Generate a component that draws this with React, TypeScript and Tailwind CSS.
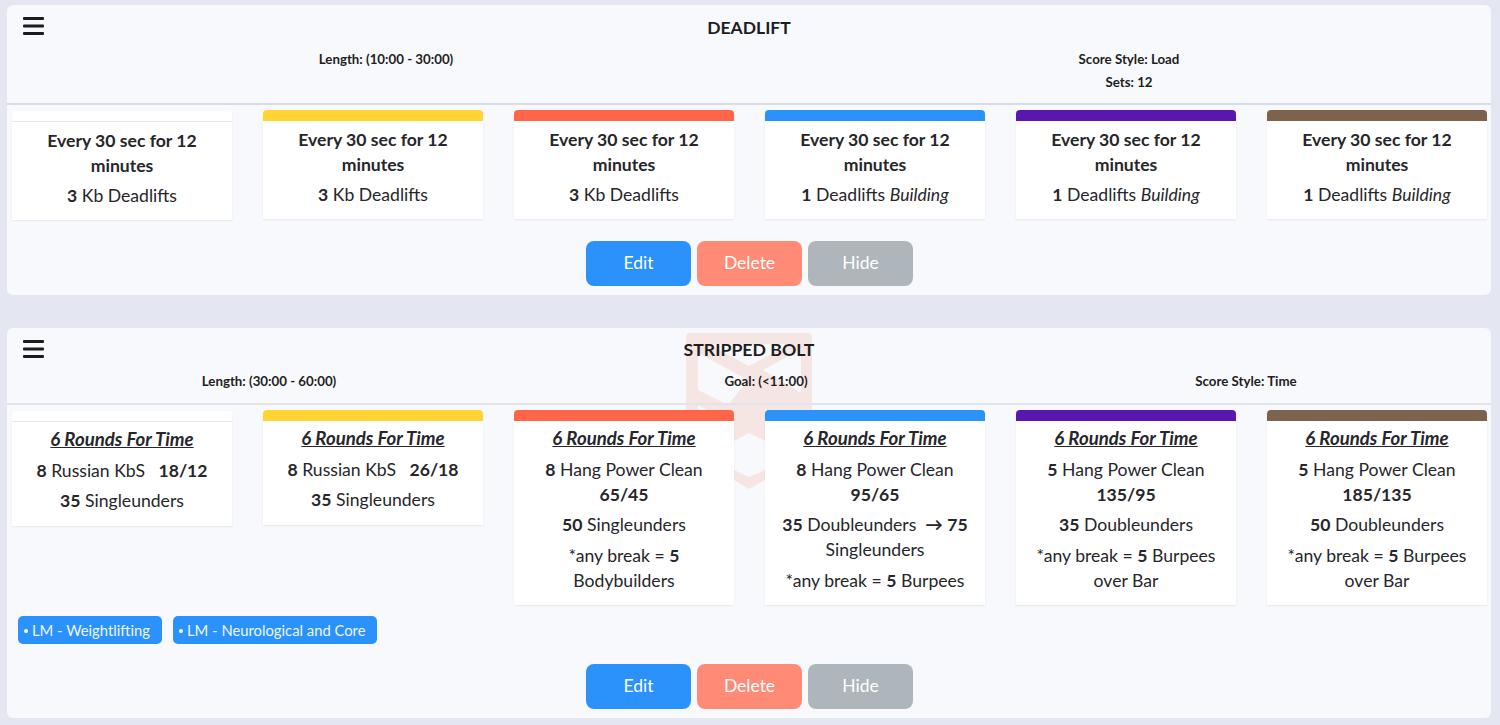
const font = { fontFamily: 'Lato, "Noto Sans", sans-serif' };

const barColors = ["bg-white border-b border-[#e6e6ee]", "bg-[#ffd433]", "bg-[#ff6549]", "bg-[#2a92fa]", "bg-[#5a17ad]", "bg-[#7d624d]"];

function Menu() {
  return (
    <svg width="21" height="18" viewBox="0 0 21 18" className="block">
      <rect x="0" y="0" width="21" height="3" rx="1" fill="#1c1c1e" />
      <rect x="0" y="7.5" width="21" height="3" rx="1" fill="#1c1c1e" />
      <rect x="0" y="15" width="21" height="3" rx="1" fill="#1c1c1e" />
    </svg>
  );
}

function Watermark() {
  return (
    <svg width="126" height="157" viewBox="0 0 126 157" className="absolute left-[679px] top-[5px]">
      <path
        fillRule="evenodd"
        fill="#f5e6e3"
        d="M4 0H122A4 4 0 0 1 126 4V77H0V4A4 4 0 0 1 4 0Z M22 11L63 33L104 11Z M12 20L62 47L42 72L12 57Z M77 37L115 16V60Z M12 72L21 77H12Z"
      />
      <path fill="#f5e6e3" d="M48 77H79V108L63 100L48 108Z M48 137L63 144L79 137V147L63 156L48 147Z" />
    </svg>
  );
}

function Card({ index, tight, children }: { index: number; tight?: boolean; children: React.ReactNode }) {
  return (
    <div className="w-[220px] shrink-0 self-start rounded-t-[4px] bg-white shadow-[0_1px_2px_rgba(0,0,0,0.08)]">
      <div className={`h-[11px] rounded-t-[4px] ${barColors[index]}`} />
      <div className={`px-2 text-center text-[17.6px] leading-[25px] text-[#26262b] ${tight ? "pt-[5px] pb-[7px]" : "pt-[6px] pb-[6px]"}`}>
        {children}
      </div>
    </div>
  );
}

function Line({ children }: { children: React.ReactNode }) {
  return <div className="mb-[5.5px]">{children}</div>;
}

function Buttons() {
  return (
    <div className="flex justify-center gap-[6px] pl-[1px] text-[17.5px] text-white">
      <button className="h-[45px] w-[105px] rounded-[8px] bg-[#2a92fa]">Edit</button>
      <button className="h-[45px] w-[105px] rounded-[8px] bg-[#ff8b76]">Delete</button>
      <button className="h-[45px] w-[105px] rounded-[8px] bg-[#aeb5bb]">Hide</button>
    </div>
  );
}

function Tag({ label, width }: { label: string; width: string }) {
  return (
    <span className={`flex h-[28px] items-center rounded-[5px] bg-[#2a92fa] pl-[6px] text-[14.8px] text-[#eef6ff] ${width}`}>
      <span className="mr-[4px] mt-[2px] h-[4px] w-[4px] rounded-full bg-white" />
      {label}
    </span>
  );
}

function Strength({ n, name, italic }: { n: string; name: string; italic?: boolean }) {
  return (
    <>
      <div className="font-bold">Every 30 sec for 12 minutes</div>
      <Line>
        <span className="mt-[5px] block">
          <b>{n}</b> {name} {italic && <i>Building</i>}
        </span>
      </Line>
    </>
  );
}

function RoundsTitle() {
  return <Line><span className="text-[18.6px] font-bold italic underline">6 Rounds For Time</span></Line>;
}

export default function App() {
  return (
    <div className="h-[725px] overflow-hidden bg-[#e4e6f1] pl-[7px] pr-[9px] pt-[5px] text-[#1e1e22]" style={font}>
      <section className="h-[290px] rounded-[6px] bg-[#f8f9fd]">
        <header className="relative h-[100px] border-b-2 border-[#d9dbeb]">
          <div className="absolute left-[16px] top-[12px]"><Menu /></div>
          <h2 className="pt-[11px] text-center text-[17.5px] leading-[23px] font-bold">DEADLIFT</h2>
          <div className="mt-[9px] grid grid-cols-[758px_728px] text-center text-[13.3px] leading-[23px] font-bold">
            <div>Length: (10:00 - 30:00)</div>
            <div>
              <div>Score Style: Load</div>
              <div>Sets: 12</div>
            </div>
          </div>
        </header>
        <div className="flex h-[136px] gap-[31px] pl-[5px] pt-[5px]">
          <div className="relative top-[1px] self-start"><Card index={0}><Strength n="3" name="Kb Deadlifts" /></Card></div>
          <Card index={1}><Strength n="3" name="Kb Deadlifts" /></Card>
          <Card index={2}><Strength n="3" name="Kb Deadlifts" /></Card>
          <Card index={3}><Strength n="1" name="Deadlifts" italic /></Card>
          <Card index={4}><Strength n="1" name="Deadlifts" italic /></Card>
          <Card index={5}><Strength n="1" name="Deadlifts" italic /></Card>
        </div>
        <Buttons />
      </section>

      <section className="relative mt-[33px] h-[390px] rounded-[6px] bg-[#f8f9fd]">
        <Watermark />
        <header className="relative h-[77px] border-b-2 border-[#e2e3ee]">
          <div className="absolute left-[16px] top-[12px]"><Menu /></div>
          <h2 className="pt-[10px] text-center text-[17.7px] leading-[23px] font-bold">STRIPPED BOLT</h2>
          <div className="mt-[9px] grid grid-cols-[524px_470px_1fr] text-center text-[13.3px] leading-[23px] font-bold">
            <div>Length: (30:00 - 60:00)</div>
            <div>Goal: (&lt;11:00)</div>
            <div>Score Style: Time</div>
          </div>
        </header>
        <div className="relative flex h-[201px] gap-[31px] pl-[5px] pt-[5px]">
          <div className="relative top-[1px] self-start">
            <Card index={0} tight>
              <RoundsTitle />
              <Line><b>8</b> Russian KbS &nbsp;&nbsp;<b>18/12</b></Line>
              <Line><b>35</b> Singleunders</Line>
            </Card>
          </div>
          <Card index={1} tight>
            <RoundsTitle />
            <Line><b>8</b> Russian KbS &nbsp;&nbsp;<b>26/18</b></Line>
            <Line><b>35</b> Singleunders</Line>
          </Card>
          <Card index={2} tight>
            <RoundsTitle />
            <Line><b>8</b> Hang Power Clean <b>65/45</b></Line>
            <Line><b>50</b> Singleunders</Line>
            <Line>*any break = <b>5</b> Bodybuilders</Line>
          </Card>
          <Card index={3} tight>
            <RoundsTitle />
            <Line><b>8</b> Hang Power Clean <b>95/65</b></Line>
            <Line><b>35</b> Doubleunders &nbsp;<b>→ 75</b> Singleunders</Line>
            <Line>*any break = <b>5</b> Burpees</Line>
          </Card>
          <Card index={4} tight>
            <RoundsTitle />
            <Line><b>5</b> Hang Power Clean <b>135/95</b></Line>
            <Line><b>35</b> Doubleunders</Line>
            <Line>*any break = <b>5</b> Burpees over Bar</Line>
          </Card>
          <Card index={5} tight>
            <RoundsTitle />
            <Line><b>5</b> Hang Power Clean <b>185/135</b></Line>
            <Line><b>50</b> Doubleunders</Line>
            <Line>*any break = <b>5</b> Burpees over Bar</Line>
          </Card>
        </div>
        <div className="relative mt-[10px] flex gap-[11px] pl-[11px]">
          <Tag label="LM - Weightlifting" width="w-[144px]" />
          <Tag label="LM - Neurological and Core" width="w-[204px]" />
        </div>
        <div className="relative mt-[20px]"><Buttons /></div>
      </section>
    </div>
  );
}
